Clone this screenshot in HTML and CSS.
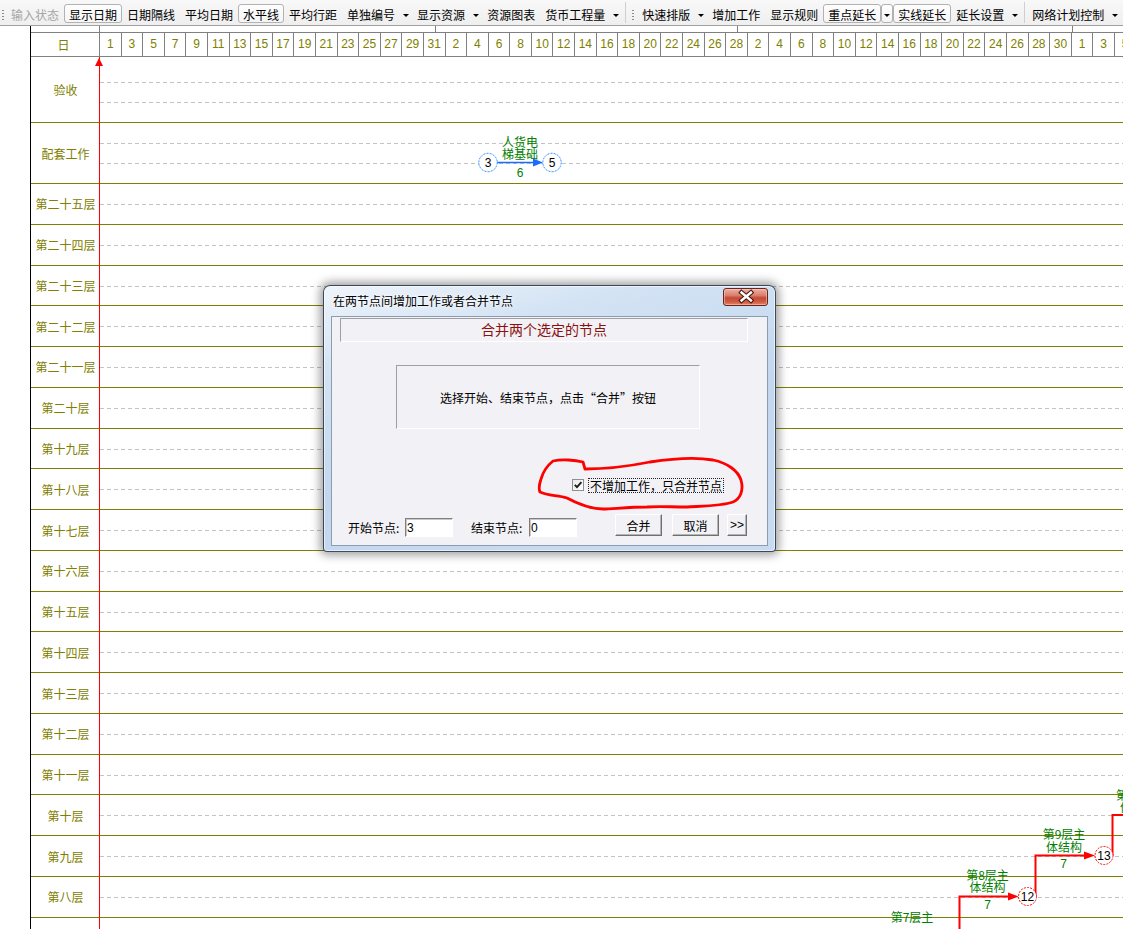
FILE: index.html
```html
<!DOCTYPE html>
<html lang="zh-CN">
<head>
<meta charset="utf-8">
<title>网络计划</title>
<link rel="stylesheet" href="styles.css">
</head>
<body>
<div class="app">
  <div class="toolbar">
    <span class="grip"></span>
    <span class="tb disabled">输入状态</span>
    <span class="tb checked">显示日期</span>
    <span class="tb">日期隔线</span>
    <span class="tb">平均日期</span>
    <span class="tb checked">水平线</span>
    <span class="tb">平均行距</span>
    <span class="tb">单独编号</span><span class="dd"></span>
    <span class="tb">显示资源</span><span class="dd"></span>
    <span class="tb">资源图表</span>
    <span class="tb">货币工程量</span><span class="dd"></span>
    <span class="sep"></span><span class="grip g2"></span>
    <span class="tb">快速排版</span><span class="dd"></span>
    <span class="tb">增加工作</span>
    <span class="tb">显示规则</span>
    <span class="tb checked">重点延长</span><span class="dd checked"></span>
    <span class="tb checked">实线延长</span>
    <span class="tb">延长设置</span><span class="dd"></span>
    <span class="sep"></span>
    <span class="tb">网络计划控制</span><span class="dd"></span>
  </div>

  <div class="main">
    <div class="gutter"></div>
    <div class="chart">
      <div class="hdr-top">
        <div class="lbl-cell"></div>
        <div class="month m31"></div>
        <div class="month m28 next"></div>
        <div class="month m31 next"></div>
        <div class="month rest next"></div>
      </div>
      <div class="hdr-days">
        <div class="lbl-cell day-title">日</div>
        <div class="day">1</div><div class="day">3</div><div class="day">5</div><div class="day">7</div>
        <div class="day">9</div><div class="day">11</div><div class="day">13</div><div class="day">15</div>
        <div class="day">17</div><div class="day">19</div><div class="day">21</div><div class="day">23</div>
        <div class="day">25</div><div class="day">27</div><div class="day">29</div><div class="day">31</div>
        <div class="day">2</div><div class="day">4</div><div class="day">6</div><div class="day">8</div>
        <div class="day">10</div><div class="day">12</div><div class="day">14</div><div class="day">16</div>
        <div class="day">18</div><div class="day">20</div><div class="day">22</div><div class="day">24</div>
        <div class="day">26</div><div class="day">28</div>
        <div class="day">2</div><div class="day">4</div><div class="day">6</div><div class="day">8</div>
        <div class="day">10</div><div class="day">12</div><div class="day">14</div><div class="day">16</div>
        <div class="day">18</div><div class="day">20</div><div class="day">22</div><div class="day">24</div>
        <div class="day">26</div><div class="day">28</div><div class="day">30</div>
        <div class="day">1</div><div class="day">3</div><div class="day">5</div>
      </div>

      <div class="row ys"><div class="lbl">验收</div><div class="lane"></div></div>
      <div class="row pt"><div class="lbl">配套工作</div><div class="lane"></div></div>
      <div class="row layer"><div class="lbl">第二十五层</div><div class="lane"></div></div>
      <div class="row layer"><div class="lbl">第二十四层</div><div class="lane"></div></div>
      <div class="row layer"><div class="lbl">第二十三层</div><div class="lane"></div></div>
      <div class="row layer"><div class="lbl">第二十二层</div><div class="lane"></div></div>
      <div class="row layer"><div class="lbl">第二十一层</div><div class="lane"></div></div>
      <div class="row layer"><div class="lbl">第二十层</div><div class="lane"></div></div>
      <div class="row layer"><div class="lbl">第十九层</div><div class="lane"></div></div>
      <div class="row layer"><div class="lbl">第十八层</div><div class="lane"></div></div>
      <div class="row layer"><div class="lbl">第十七层</div><div class="lane"></div></div>
      <div class="row layer"><div class="lbl">第十六层</div><div class="lane"></div></div>
      <div class="row layer"><div class="lbl">第十五层</div><div class="lane"></div></div>
      <div class="row layer"><div class="lbl">第十四层</div><div class="lane"></div></div>
      <div class="row layer"><div class="lbl">第十三层</div><div class="lane"></div></div>
      <div class="row layer"><div class="lbl">第十二层</div><div class="lane"></div></div>
      <div class="row layer"><div class="lbl">第十一层</div><div class="lane"></div></div>
      <div class="row layer"><div class="lbl">第十层</div><div class="lane"></div></div>
      <div class="row layer"><div class="lbl">第九层</div><div class="lane"></div></div>
      <div class="row layer"><div class="lbl">第八层</div><div class="lane"></div></div>
      <div class="row layer"><div class="lbl"></div><div class="lane"></div></div>

      <div class="today"></div>
      <div class="today-mark"></div>
    </div>
  </div>

  <svg class="diagram" width="1123" height="929" viewBox="0 0 1123 929">
    <line x1="497" y1="162.5" x2="535" y2="162.5" class="ln-blue"/>
    <polygon points="533,158.5 543,162.5 533,166.5" class="ah-blue"/>
    <circle cx="488" cy="162.5" r="9.2" class="node-blue"/>
    <circle cx="552" cy="162.5" r="9.2" class="node-blue"/>
    <text x="488" y="167.3" class="num">3</text>
    <text x="552" y="167.3" class="num">5</text>
    <text x="520" y="146.6" class="wl">人货电</text>
    <text x="520" y="158.8" class="wl">梯基础</text>
    <text x="520" y="176.8" class="wd">6</text>

    <polyline points="959.5,929 959.5,896.5 1009,896.5" class="ln-red"/>
    <polygon points="1008,892.5 1018.5,896.5 1008,900.5" class="ah-red"/>
    <polyline points="1035.5,896.5 1035.5,855.5 1085,855.5" class="ln-red"/>
    <polygon points="1084,851.5 1095,855.5 1084,859.5" class="ah-red"/>
    <polyline points="1112.5,855.5 1112.5,815 1123,815" class="ln-red"/>
    <circle cx="1027.5" cy="896.5" r="9" class="node-red"/>
    <circle cx="1104" cy="855.5" r="9" class="node-red"/>
    <text x="1027.5" y="900.8" class="num">12</text>
    <text x="1104" y="859.8" class="num">13</text>

    <text x="987.5" y="879.6" class="wl">第8层主</text>
    <text x="987.5" y="892" class="wl">体结构</text>
    <text x="987.5" y="909.3" class="wd">7</text>
    <text x="1064" y="839.3" class="wl">第9层主</text>
    <text x="1064" y="851.6" class="wl">体结构</text>
    <text x="1063.5" y="867.6" class="wd">7</text>
    <text x="912" y="922.1" class="wl">第7层主</text>
    <text x="1116" y="799.6" class="wl start">第10层主</text>
    <text x="1120" y="811.9" class="wl start">体结构</text>
  </svg>

  <div class="dlg">
    <div class="dlg-title">
      <span class="dlg-caption">在两节点间增加工作或者合并节点</span>
      <span class="dlg-close">
        <svg width="45" height="18" viewBox="0 0 45 18">
          <path d="M18.5 4.5 L28 12.5 M28 4.5 L18.5 12.5" stroke="#4a1610" stroke-width="4.6" stroke-linecap="square" fill="none"/>
          <path d="M18.5 4.5 L28 12.5 M28 4.5 L18.5 12.5" stroke="#ffffff" stroke-width="2.4" stroke-linecap="square" fill="none"/>
        </svg>
      </span>
    </div>
    <div class="dlg-client">
      <div class="cap-box">合并两个选定的节点</div>
      <div class="info-box">选择开始、结束节点，点击“合并”按钮</div>
      <div class="check-row">
        <span class="cb">
          <svg width="10" height="10" viewBox="0 0 10 10"><polyline points="1.8,4.8 4,7.2 8.4,2.2" fill="none" stroke="#1a1a1a" stroke-width="1.8"/></svg>
        </span>
        <span class="cb-label">不增加工作，只合并节点</span>
      </div>
      <div class="btn-row">
        <span class="fld-label">开始节点:</span>
        <input class="fld" type="text" value="3">
        <span class="fld-label second">结束节点:</span>
        <input class="fld" type="text" value="0">
        <button class="btn merge">合并</button>
        <button class="btn cancel">取消</button>
        <button class="btn more">&gt;&gt;</button>
      </div>
    </div>
  </div>

  <svg class="annot" width="1123" height="929" viewBox="0 0 1123 929">
    <path class="circled" d="M553,461 C562,459 575,460 583,462 L585,469 C600,469 625,467 650,462 C670,459 695,457 713,460 C728,463 738,471 741,480 C744,491 740,499 733,502 C722,506 705,506 687,507 C670,507 660,506 647,507 C628,507 612,509 603,509 C593,509 580,505 567,498 C558,495 548,496 540,492 C538,488 540,482 541,479 C543,472 548,465 553,461 Z"/>
  </svg>
</div>
</body>
</html>
```

FILE: styles.css
```css
* { box-sizing: border-box; }
html, body { margin: 0; padding: 0; }
body {
  width: 1123px;
  height: 929px;
  overflow: hidden;
  background: #fff;
  font-family: "Noto Sans CJK SC", "Noto Sans", sans-serif;
  font-size: 12px;
  color: #000;
}
.app { position: relative; width: 1123px; height: 929px; overflow: hidden; }

/* ---------- toolbar ---------- */
.toolbar {
  display: flex;
  align-items: flex-start;
  height: 26px;
  padding: 4px 0 0 2px;
  background: linear-gradient(#f8f8f8, #efefef);
  border-bottom: 1px solid #a0a0a0;
  white-space: nowrap;
}
.grip {
  flex: none;
  width: 2px;
  height: 10px;
  margin: 6px 2px 0 0;
  background: repeating-linear-gradient(to bottom, #8c8c8c 0 1px, transparent 1px 3px);
}
.grip.g2 { margin: 6px 3px 0 4px; }
.sep { flex: none; width: 1px; height: 21px; margin: -2px 2px 0 3px; background: #cfcfcf; }
.tb {
  flex: none;
  height: 19px;
  padding: 1px 4px 0;
  border: 1px solid transparent;
  line-height: 18px;
}
.tb.checked {
  border-color: #b2b2b2;
  border-radius: 3px;
  background: linear-gradient(#fefefe, #f5f5f5);
}
.tb.disabled { color: #a6a6a6; }
.dd {
  flex: none;
  position: relative;
  width: 12px;
  height: 19px;
  border: 1px solid transparent;
}
.dd.checked { border-color: #b2b2b2; border-radius: 3px; background: linear-gradient(#fefefe, #f5f5f5); }
.dd::after {
  content: "";
  position: absolute;
  left: 2px;
  top: 9px;
  border-left: 3px solid transparent;
  border-right: 3px solid transparent;
  border-top: 3px solid #000;
}

/* ---------- chart ---------- */
.main { display: flex; height: 903px; }
.gutter { flex: none; width: 30px; background: #fff; }
.chart { position: relative; flex: 1; border-left: 1px solid #000; overflow: hidden; }

.hdr-top { display: flex; height: 7px; border-bottom: 1px solid #808080; }
.hdr-days { display: flex; height: 24px; border-bottom: 1px solid #808080; }
.lbl-cell { flex: none; width: 69px; border-right: 1px solid #808080; }
.month { flex: none; }
.month.m31 { width: 334.8px; }
.month.m28 { width: 302.4px; }
.month.rest { flex: 1; }
.month.next { border-left: 1px solid #808080; }
.day-title {
  color: #808000;
  text-align: center;
  line-height: 23px;
  padding-right: 3px;
}
.day {
  flex: none;
  width: 21.6px;
  border-right: 1px solid #808080;
  text-align: center;
  color: #808000;
  font-family: "Liberation Sans", Arial, sans-serif;
  font-size: 12px;
  line-height: 23px;
}

.row {
  --dash: repeating-linear-gradient(90deg, #c3c3c3 0 4px, transparent 4px 7px);
  display: flex;
  border-bottom: 1px solid #808000;
}
.row .lbl {
  flex: none;
  width: 69px;
  display: flex;
  align-items: center;
  justify-content: center;
  color: #808000;
  white-space: nowrap;
}
.row .lane {
  flex: 1;
  background-image: var(--dash);
  background-repeat: no-repeat;
  background-size: 100% 1px;
  background-position: 0 20px;
}
.row.ys { height: 66px; }
.row.ys .lane { background-image: var(--dash), var(--dash); background-position: 0 25px, 0 45px; }
.row.pt { height: 61px; }
.row.pt .lane { background-image: var(--dash), var(--dash); background-position: 0 20px, 0 40px; }
.row.layer { height: 40.78px; flex: none; }

.today { position: absolute; left: 68px; top: 31px; bottom: 0; width: 1px; background: #ff0000; }
.today-mark {
  position: absolute;
  left: 64px;
  top: 32px;
  width: 0;
  height: 0;
  border-left: 4px solid transparent;
  border-right: 4px solid transparent;
  border-bottom: 8px solid #ff0000;
}

/* ---------- network diagram ---------- */
.diagram { position: absolute; left: 0; top: 0; z-index: 5; pointer-events: none; }
.ln-blue { stroke: #1a6cff; stroke-width: 1.6; }
.ah-blue { fill: #1a6cff; }
.node-blue { fill: #fff; stroke: #1e88ff; stroke-width: 1; stroke-dasharray: 2 1.2; }
.ln-red { fill: none; stroke: #ff0000; stroke-width: 2; }
.ah-red { fill: #ff0000; }
.node-red { fill: #fff; stroke: #ff0000; stroke-width: 1; stroke-dasharray: 2 1.2; }
.num { font-family: "Liberation Sans", Arial, sans-serif; font-size: 12px; fill: #000; text-anchor: middle; }
.wl { font-family: "Noto Sans CJK SC", sans-serif; font-size: 12px; fill: #008000; text-anchor: middle; }
.wl.start { text-anchor: start; }
.wd { font-family: "Liberation Sans", Arial, sans-serif; font-size: 12px; fill: #008000; text-anchor: middle; }

/* ---------- dialog ---------- */
.dlg {
  position: absolute;
  left: 323px;
  top: 285px;
  width: 453px;
  height: 267px;
  z-index: 10;
  display: flex;
  flex-direction: column;
  border: 1px solid rgba(35, 45, 65, 0.85);
  border-radius: 7px 7px 4px 4px;
  background: linear-gradient(165deg, #eef4fb 0%, #d3e3f4 22%, #c2d7ee 55%, #c8dcf1 100%);
  box-shadow: 0 0 10px 3px rgba(0, 0, 0, 0.38), inset 0 0 0 1px rgba(255, 255, 255, 0.55);
}
.dlg-title { position: relative; flex: none; height: 30px; padding-left: 9px; line-height: 30px; }
.dlg-caption { color: #000; text-shadow: 0 0 6px #ffffff, 0 0 3px #ffffff; }
.dlg-close {
  position: absolute;
  top: 2px;
  right: 7px;
  width: 45px;
  height: 18px;
  border: 1px solid #6b231b;
  border-radius: 3px;
  background: linear-gradient(#eab1a3 0%, #d9806d 40%, #c44a35 55%, #cf5c43 80%, #e0876a 100%);
  box-shadow: inset 0 0 0 1px rgba(255, 210, 200, 0.5);
}
.dlg-close svg { position: absolute; left: -1px; top: -1px; }
.dlg-client {
  flex: none;
  height: 230px;
  margin: 0 7px;
  border: 1px solid #8d9cb0;
  background: #f2f1f5;
}
.cap-box {
  width: 408px;
  height: 24px;
  margin: 1px 0 0 8px;
  border: 1px solid;
  border-color: #a0a0a0 #ffffff #ffffff #a0a0a0;
  color: #8b1010;
  font-size: 14px;
  line-height: 21px;
  text-align: center;
}
.info-box {
  width: 304px;
  height: 64px;
  margin: 23px 0 0 64px;
  border: 1px solid;
  border-color: #a0a0a0 #ffffff #ffffff #a0a0a0;
  display: flex;
  align-items: center;
  justify-content: center;
}
.check-row { display: flex; align-items: center; height: 16px; margin: 48px 0 0 240px; }
.cb {
  flex: none;
  width: 12px;
  height: 12px;
  margin-right: 4px;
  border: 1px solid #8e8f8f;
  background: linear-gradient(135deg, #e9e9e9, #ffffff);
}
.cb svg { display: block; }
.cb-label { height: 15px; padding: 0 1px; border: 1px dotted #222; line-height: 13px; white-space: nowrap; }
.btn-row { display: flex; align-items: flex-start; height: 23px; margin: 21px 0 0 16px; }
.fld-label { flex: none; width: 57px; margin-top: 4px; line-height: 19px; white-space: nowrap; }
.fld-label.second { width: 58px; margin-left: 18px; }
.fld {
  flex: none;
  width: 48px;
  height: 19px;
  margin: 4px 0 0;
  padding: 0 0 0 1px;
  border: 1px solid;
  border-color: #7f7f7f #ffffff #ffffff #7f7f7f;
  box-shadow: inset 1px 1px 0 #c8c8c8;
  background: #fff;
  font-family: "Liberation Sans", Arial, sans-serif;
  font-size: 12px;
  color: #000;
  outline: none;
}
.btn {
  flex: none;
  width: 47px;
  height: 22px;
  padding: 0;
  border: 1px solid;
  border-color: #ffffff #707070 #707070 #ffffff;
  box-shadow: inset -1px -1px 0 #b4b4b4;
  background: #f2f1f5;
  font-family: "Noto Sans CJK SC", sans-serif;
  font-size: 12px;
  color: #000;
  line-height: 19px;
}
.btn.merge { margin-left: 38px; }
.btn.cancel { margin-left: 10px; }
.btn.more { width: 20px; margin-left: 8px; font-family: "Liberation Sans", Arial, sans-serif; }

/* ---------- annotation ---------- */
.annot { position: absolute; left: 0; top: 0; z-index: 20; pointer-events: none; }
.circled { fill: none; stroke: #ff0000; stroke-width: 2.8; stroke-linejoin: round; }
```
